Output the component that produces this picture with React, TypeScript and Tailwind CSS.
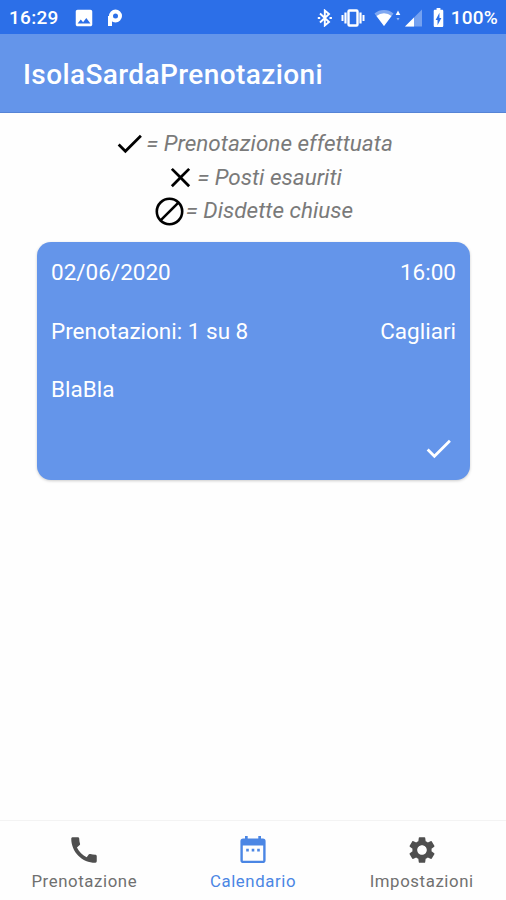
import type { ReactNode } from "react";
import { MdBatteryChargingFull, MdCall, MdCheck, MdClose, MdImage, MdSettings } from "react-icons/md";

const CancelIcon = () => (
    <svg viewBox="0 0 33 33" className="size-[33px] shrink-0" fill="none" stroke="currentColor" strokeWidth="2.6">
        <circle cx="16.5" cy="16.5" r="12.7" />
        <path d="M7.6 25.4 25.4 7.6" />
    </svg>
);

const CalendarIcon = () => (
    <svg viewBox="0 0 28 30" className="h-[30px] w-7" fill="currentColor">
        <path
            fillRule="evenodd"
            d="M6 1h2.7v2.4h10.6V1H22v2.4h1.8a2.8 2.8 0 0 1 2.8 2.8v19a2.8 2.8 0 0 1-2.8 2.8H4.2a2.8 2.8 0 0 1-2.8-2.8v-19a2.8 2.8 0 0 1 2.8-2.8H6ZM3.8 10.5v15.2h20.4V10.5Z"
        />
        <path d="M7.2 13.8h2.6v2.6H7.2zM12.7 13.8h2.6v2.6h-2.6zM18.2 13.8h2.6v2.6h-2.6z" />
    </svg>
);

function StatusBar() {
    return (
        <div className="flex h-[34px] shrink-0 items-center bg-[#2c6fe8] pl-[9px] pr-2 pt-px text-[19px] font-medium leading-none text-white">
            <span className="w-16 tracking-[0.3px]">16:29</span>
            <MdImage className="size-[22px]" />
            <svg viewBox="0 0 16 18" className="ml-[12px] h-[18px] w-4" fill="none" stroke="currentColor">
                <circle cx="8.5" cy="7" r="4.5" strokeWidth="4" />
                <path d="M3 7v10" strokeWidth="4" />
            </svg>
            <div className="ml-auto flex items-center">
                <svg viewBox="0 0 16 18" className="h-[18px] w-4" fill="none" stroke="currentColor" strokeWidth="1.9">
                    <path d="m3 4.5 9 8.5-4.2 3.5v-15L12 5l-9 8.5" />
                    <path d="M.8 9h2.4M12.5 9h2.4" strokeWidth="2" />
                </svg>
                <svg viewBox="0 0 24 18" className="ml-2 h-[18px] w-6" fill="none" stroke="currentColor">
                    <rect x="7.5" y="1.5" width="9" height="15" rx="1" strokeWidth="2.4" />
                    <path d="M4.5 3.5v11M19.5 3.5v11" strokeWidth="2.2" />
                    <path d="M1.5 6v6M22.5 6v6" strokeWidth="2" />
                </svg>
                <svg viewBox="0 0 28 18" className="ml-[9px] h-[18px] w-7" fill="currentColor">
                    <path d="M.5 4.5a15 15 0 0 1 19 0L10 17Z" opacity=".4" />
                    <path d="M2.5 7a11.5 11.5 0 0 1 15 0L10 17Z" />
                    <path d="M21.7 6 24 1.5 26.3 6Z" />
                    <path d="m22.5 9 1.5 2.5L25.5 9Z" opacity=".5" />
                </svg>
                <svg viewBox="0 0 18 18" className="ml-[3px] size-[18px]" fill="currentColor">
                    <path d="M0 17.5 17 .5v17Z" opacity=".35" />
                    <path d="M0 17.5 9 8.5v9Z" />
                </svg>
                <MdBatteryChargingFull className="ml-1 size-[23px]" />
                <span className="ml-px tracking-[0.2px]">100%</span>
            </div>
        </div>
    );
}

function LegendRow({ icon, children }: { icon: ReactNode; children: ReactNode }) {
    return (
        <div className="flex h-[33.7px] items-center justify-center">
            <span className="text-black">{icon}</span>
            <span>{children}</span>
        </div>
    );
}

function BookingCard() {
    return (
        <div className="ml-[37px] mr-9 mt-[14px] flex h-[238px] flex-col rounded-[14px] bg-[#6495ea] px-[14px] pt-[15px] text-[22.5px] leading-[30px] text-white shadow-[0_1px_3px_rgba(0,0,0,0.2)]">
            <div className="flex justify-between">
                <span>02/06/2020</span>
                <span>16:00</span>
            </div>
            <div className="mt-[29px] flex justify-between">
                <span>Prenotazioni: 1 su 8</span>
                <span>Cagliari</span>
            </div>
            <div className="mt-[28px]">BlaBla</div>
            <MdCheck className="mr-px mt-[28px] size-[33px] self-end" />
        </div>
    );
}

function Tab({ icon, label, active = false }: { icon: ReactNode; label: string; active?: boolean }) {
    return (
        <div className={active ? "flex flex-1 flex-col items-center text-[#4b86e4]" : "flex flex-1 flex-col items-center text-[#4f4f4f]"}>
            <div className="flex h-[34px] items-center">{icon}</div>
            <span className={active ? "mt-1 text-[16.8px] leading-[21px] tracking-[0.6px]" : "mt-1 text-[16.8px] leading-[21px] tracking-[0.6px] text-[#707070]"}>
                {label}
            </span>
        </div>
    );
}

export default function App() {
    return (
        <div className="flex h-[900px] w-[506px] flex-col overflow-hidden bg-[#fefefe] font-[Roboto,sans-serif]">
            <StatusBar />
            <header className="flex h-[79px] shrink-0 items-center border-b border-[#5684d6] bg-[#6495ea] px-[23px] pt-[4px] text-[28px] font-medium tracking-[0.4px] text-white">
                IsolaSardaPrenotazioni
            </header>
            <main className="flex-1 pt-[14px] text-[22.5px] italic text-[#7a7a7a]">
                <LegendRow icon={<MdCheck className="size-[33px]" />}>= Prenotazione effettuata</LegendRow>
                <LegendRow icon={<MdClose className="size-[33px]" />}>= Posti esauriti</LegendRow>
                <LegendRow icon={<CancelIcon />}>= Disdette chiuse</LegendRow>
                <div className="not-italic">
                    <BookingCard />
                </div>
            </main>
            <nav className="flex h-20 shrink-0 border-t border-[#f3f3f3] pt-3">
                <Tab icon={<MdCall className="size-[34px]" />} label="Prenotazione" />
                <Tab icon={<CalendarIcon />} label="Calendario" active />
                <Tab icon={<MdSettings className="size-8" />} label="Impostazioni" />
            </nav>
        </div>
    );
}
